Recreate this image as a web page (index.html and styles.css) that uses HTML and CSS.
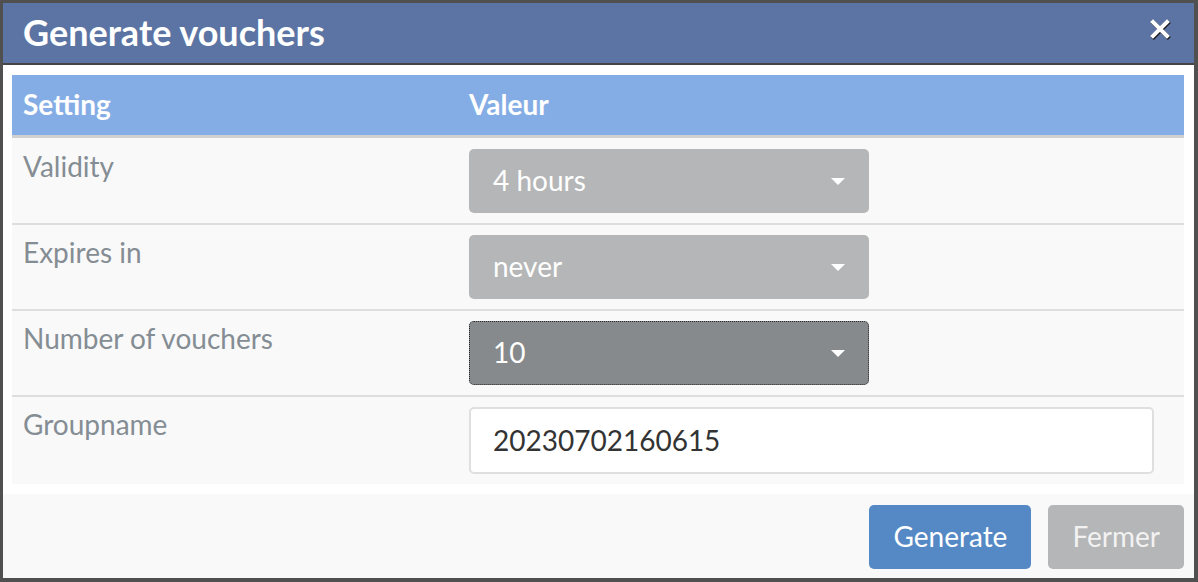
FILE: index.html
```html
<!DOCTYPE html>
<html lang="fr">
<head>
<meta charset="utf-8">
<title>Generate vouchers</title>
<link rel="stylesheet" href="styles.css">
</head>
<body>
<div class="dialog">
  <div class="dialog-header">
    <h1 class="dialog-title">Generate vouchers</h1>
    <span class="close" aria-label="close">
      <svg width="22" height="22" viewBox="0 0 22 22">
        <path d="M4 4 L18 18 M18 4 L4 18" stroke="#1a1a1a" stroke-width="4.2" stroke-linecap="square" transform="translate(0.8,1)"/>
        <path d="M4 4 L18 18 M18 4 L4 18" stroke="#ffffff" stroke-width="4" stroke-linecap="square"/>
      </svg>
    </span>
  </div>
  <div class="dialog-body">
    <div class="table">
      <div class="row head">
        <div class="cell c1">Setting</div>
        <div class="cell c2">Valeur</div>
      </div>
      <div class="row first">
        <div class="cell c1 label">Validity</div>
        <div class="cell c2"><div class="select">4 hours<span class="caret"></span></div></div>
      </div>
      <div class="row sep">
        <div class="cell c1 label">Expires in</div>
        <div class="cell c2"><div class="select">never<span class="caret"></span></div></div>
      </div>
      <div class="row sep">
        <div class="cell c1 label">Number of vouchers</div>
        <div class="cell c2"><div class="select focused">10<span class="caret"></span></div></div>
      </div>
      <div class="row sep">
        <div class="cell c1 label">Groupname</div>
        <div class="cell c2"><div class="input">20230702160615</div></div>
      </div>
    </div>
  </div>
  <div class="dialog-footer">
    <button class="btn primary">Generate</button>
    <button class="btn secondary">Fermer</button>
  </div>
</div>
</body>
</html>
```

FILE: styles.css
```css
* { box-sizing: border-box; }
html, body { margin: 0; padding: 0; }
body {
  width: 1198px;
  height: 582px;
  font-family: Lato, "Open Sans", sans-serif;
  background: #4e4e4e;
  overflow: hidden;
}
.dialog {
  width: 1198px;
  height: 582px;
  border-style: solid;
  border-color: #505050;
  border-width: 3px 4px 4px 3px;
  display: flex;
  flex-direction: column;
  background: #fff;
}
.dialog-header {
  height: 62px;
  flex: none;
  background: #5b74a3;
  border-bottom: 2px solid #454545;
  display: flex;
  align-items: center;
  justify-content: space-between;
  padding: 0 23px 0 20px;
}
.dialog-title {
  margin: 0;
  color: #fff;
  font-size: 36px;
  font-weight: 700;
  line-height: 1;
  padding-bottom: 2px;
}
.close { display: flex; margin-top: -8px; }
.dialog-body {
  background: #fff;
  padding: 10px 10px 10px 9px;
  flex: none;
}
.table { background: #f9f9f9; }
.row { display: flex; }
.row.head {
  background: #85ade5;
  height: 63px;
  border-bottom: 3px solid #d0d0d0;
  align-items: center;
}
.row.head .cell {
  color: #fff;
  font-weight: 700;
  font-size: 28px;
  padding-top: 0;
  padding-bottom: 2px;
}
.row.sep { border-top: 2px solid #dedede; }
.cell { padding: 10px 11px 10px 11px; }
.row.first .cell { padding-top: 11px; }
.c1 { width: 446px; flex: none; }
.c2 { flex: 1; padding-right: 30px; }
.label {
  color: #858d94;
  font-size: 28px;
  line-height: 35px;
}
.select {
  width: 400px;
  height: 64px;
  background: #b5b6b7;
  border-radius: 5px;
  color: #fff;
  font-size: 28px;
  display: flex;
  align-items: center;
  justify-content: space-between;
  padding: 0 24px 3px 24px;
}
.select.focused {
  background: #868a8c;
  outline: 1px dotted #2a2a2a;
  outline-offset: -1px;
}
.caret {
  width: 0;
  height: 0;
  border-left: 7px solid transparent;
  border-right: 7px solid transparent;
  border-top: 7px solid #fff;
  margin-top: 4px;
}
.input {
  height: 67px;
  background: #fff;
  border: 2px solid #dfdfdf;
  border-radius: 5px;
  color: #333;
  font-size: 28px;
  display: flex;
  align-items: center;
  padding: 0 22px 1px 22px;
}
.dialog-footer {
  flex: 1;
  background: #f9f9f9;
  display: flex;
  justify-content: flex-end;
  align-items: flex-start;
  gap: 17px;
  padding: 11px 10px 0 0;
}
.btn {
  height: 64px;
  border: none;
  border-radius: 5px;
  font-family: Lato, "Open Sans", sans-serif;
  font-size: 28px;
  color: #fff;
  padding: 0 24px 2px 24px;
}
.btn.primary { background: #5589c5; }
.btn.secondary { background: #b5b6b7; color: #f2f2f2; }
```
